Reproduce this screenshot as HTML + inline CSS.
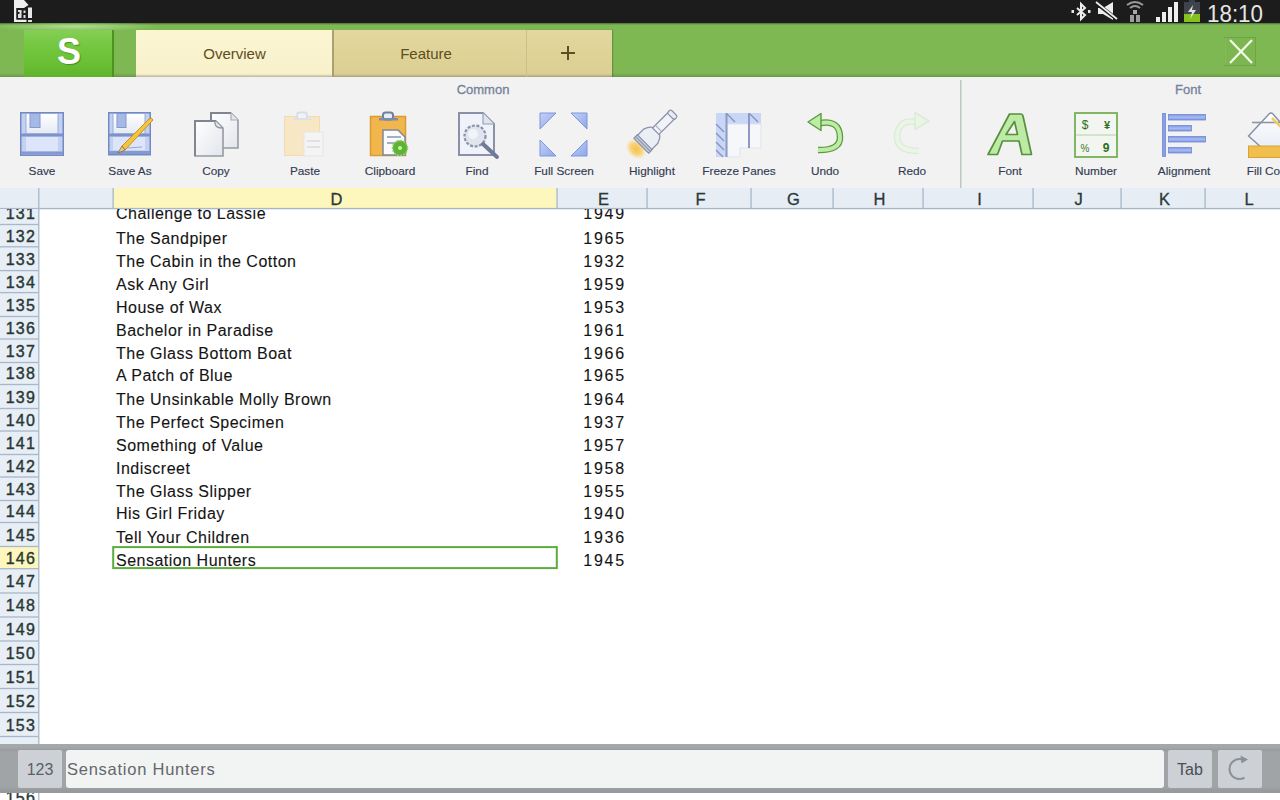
<!DOCTYPE html>
<html><head><meta charset="utf-8">
<style>
*{margin:0;padding:0;box-sizing:border-box}
html,body{width:1280px;height:800px;overflow:hidden;background:#fff;font-family:"Liberation Sans",sans-serif}
.abs{position:absolute}
#status{left:0;top:0;width:1280px;height:23px;background:#1c1c1c}
#appbar{left:0;top:23px;width:1280px;height:54px;background:linear-gradient(180deg,#4f6f3c 0px,#7db852 2px,#7fb853 50px,#77a950 52px,#6a9450 54px)}
#logo{left:24px;top:30px;width:90px;height:47px;background:linear-gradient(180deg,#84cf55 0%,#74c740 35%,#69bf33 75%,#60b22c 100%);border-right:2px solid #4a9420}
#logo span{position:absolute;left:1px;top:2px;width:88px;text-shadow:1px 1px 1px rgba(40,90,20,0.5);text-align:center;color:#fff;font-weight:bold;font-size:36px;line-height:40px}
.tab{top:30px;height:47px;text-align:center;font-size:15px;line-height:48px;color:#5e4d20}
#t1{left:136px;width:197px;background:linear-gradient(180deg,#fbf5d2 0,#f8f1cc 44px,#b8b49c 47px)}
#t2{left:332px;width:194px;background:linear-gradient(180deg,#e2d79d 0,#dccf93 44px,#a8a07a 47px);border-left:2px solid #aaa170;padding-right:8px}
#t3{left:526px;width:86px;background:linear-gradient(180deg,#e2d79d 0,#dccf93 44px,#a8a07a 47px);border-left:1px solid #cdbf88;box-shadow:1px 0 1px rgba(60,80,40,0.35)}
#t3:before{content:"";position:absolute;left:34px;top:16px;width:14px;height:2px;background:#5e4d20;top:22px}
#t3:after{content:"";position:absolute;left:40px;top:16px;width:2px;height:14px;background:#5e4d20}
#close{left:1222px;top:32px;width:38px;height:38px}
#toolbar{left:0;top:77px;width:1280px;height:111px;background:#f2f2f2}
.grp{top:82.5px;font-size:13px;color:#74839a;-webkit-text-stroke:0.3px #74839a;height:14px;line-height:14px;text-align:center}
.lbl{height:14px;line-height:14px;text-align:center;font-size:11.8px;color:#333b52;white-space:nowrap;-webkit-text-stroke:0.15px #333b52}
#sep{left:960px;top:80px;width:1px;height:108px;background:#b5bfb5}
#colhdr{left:0;top:188px;width:1280px;height:21px;background:#e5ecf4;border-bottom:1px solid #a9b9cc}
.ch{top:188px;height:21px;font-size:16.5px;line-height:23px;text-align:center;color:#2a3835;-webkit-text-stroke:0.3px #2a3835;overflow:hidden;padding-left:3px}
#rowhdr{left:0;top:209px;width:39px;height:535px;background:#e7edf5;border-right:1px solid #a9b9cc}
.rh{left:0;width:38px;height:23px;line-height:23px;text-align:right;padding-right:2px;font-size:16px;color:#2a3835;letter-spacing:1.2px;white-space:nowrap;-webkit-text-stroke:0.4px #2a3835}
.cd{left:116px;height:23px;line-height:23px;font-size:16px;color:#141414;letter-spacing:0.5px;white-space:nowrap;-webkit-text-stroke:0.1px #141414}
.ce{left:540px;width:86px;height:23px;line-height:23px;text-align:right;font-size:16px;color:#141414;letter-spacing:1.8px;-webkit-text-stroke:0.1px #141414}
#sel{left:112px;top:546px;width:446px;height:24px;border:2px solid #5cab3c}
#bottom{left:0;top:744px;width:1280px;height:49px;background:linear-gradient(180deg,#a6a9ac 0,#a3a6a9 4px,#989b9e 6px,#a1a4a7 8px,#a1a4a7 43px,#96999c 47px,#9a9da0 49px)}
#k123{left:18px;top:750px;width:44px;height:38px;background:#cdd1d6;border-radius:2px;font-size:16px;color:#5a5f66;text-align:center;line-height:39px}
#inp{left:66px;top:750px;width:1098px;height:38px;background:#f2f3f3;border-radius:3px;font-size:16.5px;color:#63676d;line-height:39px;padding-left:1px;letter-spacing:0.75px}
#tabk{left:1168px;top:750px;width:44px;height:38px;background:#cdd1d6;border-radius:2px;font-size:16px;color:#4a4f56;text-align:center;line-height:39px}
#refk{left:1218px;top:750px;width:44px;height:38px;background:#cdd1d6;border-radius:2px}
</style></head><body>
<div id="status" class="abs"></div>
<div id="appbar" class="abs"></div>
<div class="abs" style="left:0;top:23px;width:180px;height:8px;background:radial-gradient(ellipse 85px 5px at 75px 3.5px,rgba(190,235,160,0.75),rgba(190,235,160,0))"></div>
<div id="logo" class="abs"><span>S</span></div>
<svg class="abs" style="left:0;top:0" width="1280" height="80" viewBox="0 0 1280 80">
<!-- left doc icon -->
<path d="M14,0 H24 L28.5,5 L24,8 H14 Z" fill="#eeeeee"/>
<rect x="14" y="0" width="2.5" height="22" fill="#eeeeee"/>
<rect x="14" y="19.5" width="12.5" height="2.5" fill="#eeeeee"/>
<rect x="16.5" y="8" width="10.5" height="11.5" fill="#1e1e1e"/>
<rect x="18" y="10" width="3.5" height="2" fill="#e0e0e0"/><rect x="19.5" y="11.5" width="2" height="3" fill="#e0e0e0"/><rect x="18" y="14" width="3.5" height="4" fill="#e0e0e0"/>
<rect x="23.5" y="10.5" width="2" height="2.5" fill="#e0e0e0"/><rect x="23.5" y="15" width="2" height="3" fill="#e0e0e0"/>
<rect x="28" y="7.5" width="4" height="10.5" fill="#e8e8e8"/>
<rect x="28" y="20" width="4" height="2" fill="#dddddd"/>
<!-- bluetooth -->
<path d="M1077,8 L1085,15 L1081,19 V4 L1085,8 L1077,15" fill="none" stroke="#eeeeee" stroke-width="2"/>
<rect x="1071.5" y="10" width="2.5" height="3" fill="#e6e6e6"/>
<rect x="1088" y="10" width="2.5" height="3" fill="#e6e6e6"/>
<!-- mute -->
<path d="M1098,8 H1103 L1113,2 V20 L1103,14 H1098 Z" fill="#ededed"/>
<line x1="1096" y1="3" x2="1118" y2="20" stroke="#1c1c1c" stroke-width="3.5"/>
<line x1="1096" y1="2" x2="1117" y2="19" stroke="#ededed" stroke-width="1.8"/>
<!-- hotspot (gray) -->
<g fill="none" stroke="#9a9a9a" stroke-width="2">
<path d="M1127,5 Q1135,-1 1143,5"/>
<path d="M1130,8 Q1135,4 1140,8"/>
</g>
<rect x="1133" y="10" width="4" height="4" fill="#a8a8a8"/>
<rect x="1130" y="15" width="4" height="7" fill="#9c9c9c"/>
<rect x="1136" y="15" width="4" height="7" fill="#9c9c9c"/>
<!-- signal -->
<g fill="#eeeeee">
<rect x="1156" y="17" width="4" height="5"/>
<rect x="1162" y="12" width="4" height="10"/>
<rect x="1168" y="7" width="4" height="15"/>
<rect x="1174" y="2" width="4" height="20"/>
</g>
<!-- battery -->
<rect x="1189" y="0" width="6" height="2" fill="#3a3f48"/>
<rect x="1184" y="2" width="16" height="12" fill="#3e434c"/>
<rect x="1184" y="14" width="16" height="8" fill="#86c21e"/>
<path d="M1193,5 L1188,12 H1192 L1190,19 L1196,10 H1192 Z" fill="#f2f2f2" opacity="0.9"/>
<!-- time -->
<text x="1207" y="22" font-family="Liberation Sans" font-size="24" fill="#e6e6e6" textLength="56" lengthAdjust="spacingAndGlyphs">18:10</text>
<!-- close button -->
<rect x="1224.5" y="37.5" width="31" height="28" fill="#7db651" stroke="#6fa548" stroke-width="1"/>
<line x1="1225" y1="38" x2="1225" y2="65" stroke="#8cc264" stroke-width="1"/>
<line x1="1230" y1="40" x2="1252" y2="63" stroke="#f2fbe9" stroke-width="2.2"/>
<line x1="1252" y1="40" x2="1230" y2="63" stroke="#f2fbe9" stroke-width="2.2"/>
</svg>

<div id="t1" class="abs tab">Overview</div>
<div id="t2" class="abs tab">Feature</div>
<div id="t3" class="abs tab"></div>
<div id="toolbar" class="abs"></div>
<svg class="abs" style="left:0;top:0" width="1280" height="188" viewBox="0 0 1280 188">
<defs>
<linearGradient id="gw" x1="0" y1="0" x2="0" y2="1"><stop offset="0" stop-color="#ffffff"/><stop offset="1" stop-color="#e4e9f4"/></linearGradient>
<linearGradient id="gp" x1="0" y1="0" x2="1" y2="1"><stop offset="0" stop-color="#ffffff"/><stop offset="1" stop-color="#e2e5ec"/></linearGradient>
<linearGradient id="gt" x1="0" y1="0" x2="1" y2="1"><stop offset="0" stop-color="#c5d2f8"/><stop offset="1" stop-color="#8ea6ea"/></linearGradient>
<radialGradient id="glow"><stop offset="0" stop-color="#f6c048"/><stop offset="0.55" stop-color="#f7cf68" stop-opacity="0.85"/><stop offset="1" stop-color="#f8e0a0" stop-opacity="0"/></radialGradient>
</defs>
<!-- Save -->
<g>
<rect x="20.75" y="112.75" width="42.5" height="42.5" fill="#c3d0f0" stroke="#7189c5" stroke-width="1.5"/>
<rect x="26" y="113.5" width="32" height="20.5" fill="url(#gw)" stroke="#9aabd8" stroke-width="1"/>
<rect x="30" y="113.5" width="10" height="14" fill="#a6b8e6" stroke="#8599cf" stroke-width="1"/>
<rect x="21" y="133.5" width="42" height="3" fill="#7d92cb"/>
<rect x="26" y="137" width="32" height="14" fill="#dce5f9"/>
<rect x="21" y="151.5" width="42" height="3" fill="#8499d0"/>
</g>
<!-- Save As -->
<g>
<rect x="108.75" y="112.75" width="41.5" height="42" fill="#c3d0f0" stroke="#7189c5" stroke-width="1.5"/>
<rect x="113" y="113.5" width="32" height="20.5" fill="url(#gw)" stroke="#9aabd8" stroke-width="1"/>
<rect x="117" y="113.5" width="9" height="14" fill="#a6b8e6" stroke="#8599cf" stroke-width="1"/>
<rect x="109" y="133.5" width="41" height="3" fill="#7d92cb"/>
<rect x="113" y="137" width="32" height="13" fill="#dce5f9"/>
<rect x="109" y="151" width="41" height="3" fill="#8499d0"/>
<path d="M122,146 L149,119 Q152,117 153,120 L125,150 Z" fill="#f3c43e" stroke="#c99324" stroke-width="1"/>
<path d="M122,146 L125,150 L118,153 Z" fill="#e8c890" stroke="#8a6a30" stroke-width="0.8"/>
<line x1="127" y1="148" x2="142" y2="147" stroke="#9aa8cc" stroke-width="1.2"/>
</g>
<!-- Copy -->
<g>
<path d="M211,113 H231 L238,120 V148 H211 Z" fill="url(#gp)" stroke="#9499a3" stroke-width="1.6"/>
<path d="M211,148 V113 H231" fill="none" stroke="#80868f" stroke-width="2"/>
<path d="M231,113 V120 H238" fill="#e4e6ea" stroke="#a8adb6" stroke-width="1.2"/>
<path d="M195,121 H216 L223,128 V156 H195 Z" fill="url(#gp)" stroke="#9499a3" stroke-width="1.6"/>
<path d="M195,156 V121 H216" fill="none" stroke="#80868f" stroke-width="2"/>
<path d="M215,121 Q214,128 222,128" fill="#e6e8ec" stroke="#8b909b" stroke-width="1.3"/>
</g>
<!-- Paste (disabled) -->
<g>
<rect x="284.5" y="116.5" width="35" height="39" fill="#f7e7c4" stroke="#eedcb6" stroke-width="1"/>
<rect x="297" y="112.5" width="10" height="6.5" rx="2.5" fill="#f2f3f5" stroke="#d9dde6" stroke-width="1.8"/>
<rect x="293" y="118" width="19" height="2" fill="#dde1e8"/>
<rect x="304" y="132" width="19" height="24" fill="#f4f4f4" stroke="#e6e6e6" stroke-width="1"/>
<line x1="307" y1="141" x2="320" y2="141" stroke="#dcdcdc" stroke-width="1.5"/>
<line x1="307" y1="147" x2="320" y2="147" stroke="#dcdcdc" stroke-width="1.5"/>
</g>
<!-- Clipboard -->
<g>
<rect x="370.5" y="116.5" width="35" height="39" fill="#f1b64c" stroke="#d99c34" stroke-width="1.5"/>
<rect x="383" y="112.5" width="10" height="7" rx="2.5" fill="#e8ecf4" stroke="#6f80a4" stroke-width="2"/>
<rect x="379" y="118" width="19" height="2.5" fill="#7d8cac"/>
<path d="M383,130 H398 L405,137 V155 H383 Z" fill="#fafbfd" stroke="#7f889c" stroke-width="1.5"/>
<line x1="387" y1="137" x2="401" y2="137" stroke="#8a94b0" stroke-width="1.5"/>
<line x1="387" y1="143" x2="401" y2="143" stroke="#8a94b0" stroke-width="1.5"/>
<circle cx="400" cy="148" r="7.5" fill="#5db332" stroke="#9ad07a" stroke-width="1.5" stroke-dasharray="2 1.2"/>
<circle cx="400" cy="148" r="2" fill="#c8f0b0"/>
</g>
<!-- Find -->
<g>
<path d="M459,113 H483 L494,124 V155 H459 Z" fill="#eff2f9" stroke="#8990a8" stroke-width="2"/>
<path d="M483,113 V124 H494" fill="#dfe3ec" stroke="#9aa0b5" stroke-width="1.2"/>
<circle cx="475" cy="136" r="10.5" fill="#e0e4ee" stroke="#8a92aa" stroke-width="2.2" stroke-dasharray="3 1.6"/>
<circle cx="473" cy="134" r="5" fill="#f4f6fa" opacity="0.8"/>
<line x1="483" y1="144" x2="497" y2="157" stroke="#6f7a98" stroke-width="4" stroke-linecap="round"/>
</g>
<!-- Full Screen -->
<g fill="url(#gt)" stroke="#7f96da" stroke-width="1">
<path d="M540,113 H556 L540,129 Z"/>
<path d="M571,113 H587 V129 Z"/>
<path d="M540,140 L556,156 H540 Z"/>
<path d="M587,140 V156 H571 Z"/>
</g>
<!-- Highlight -->
<g>
<ellipse cx="636" cy="149" rx="12" ry="9" transform="rotate(45 636 149)" fill="url(#glow)"/>
<g transform="rotate(-45 643 144)">
<path d="M644,134 L654,134 Q663,137 663,144 Q663,151 654,154 L644,154 Z" fill="#eceef5" stroke="#8c94ac" stroke-width="1.3"/>
<rect x="640.5" y="133.5" width="5" height="21" fill="#c8cede" stroke="#7f88a3" stroke-width="1"/><line x1="643" y1="134" x2="643" y2="154" stroke="#8a93ad" stroke-width="1.2"/>
<rect x="661" y="139.5" width="22" height="9" fill="#f1f3f8" stroke="#8c94ac" stroke-width="1.3"/>
<line x1="665" y1="140" x2="665" y2="148" stroke="#a0a8bd" stroke-width="1"/>
<rect x="682" y="139" width="5" height="10" rx="2" fill="#e8ebf2" stroke="#8c94ac" stroke-width="1.2"/>
</g>
</g>
<!-- Freeze Panes -->
<g>
<rect x="716" y="113" width="45" height="11" fill="#cad6f6"/>
<rect x="716" y="113" width="11" height="44" fill="#cad6f6"/>
<path d="M727,124 H761 V148 H740 V157 H727 Z" fill="#f6f7fa" stroke="#dfe3ea" stroke-width="1"/>
<line x1="726.5" y1="113" x2="726.5" y2="157" stroke="#8d9ac4" stroke-width="2"/>
<line x1="749" y1="113" x2="749" y2="148" stroke="#8d9ac4" stroke-width="2"/>
<g stroke="#8592c0" stroke-width="1.3">
<line x1="716" y1="124" x2="724" y2="132"/><line x1="716" y1="133" x2="724" y2="141"/><line x1="716" y1="142" x2="724" y2="150"/><line x1="716" y1="150" x2="723" y2="157"/>
<line x1="727" y1="114" x2="735" y2="122"/><line x1="750" y1="114" x2="758" y2="122"/>
</g>
</g>
<!-- Undo -->
<g>
<path d="M819,123.5 Q839.5,119 840,137 Q840.5,150.5 818,150" fill="none" stroke="#5a9a40" stroke-width="6.5"/>
<path d="M819,123.5 Q839.5,119 840,137 Q840.5,150.5 818,150" fill="none" stroke="#bdeca4" stroke-width="4"/>
<path d="M808,122 L821,113.5 L821,130.5 Z" fill="#bdeca4" stroke="#5a9a40" stroke-width="1.4" stroke-linejoin="round"/>
</g>
<!-- Redo (disabled) -->
<g>
<path d="M916,122 Q898,119 897,137 Q897,151 919,151" fill="none" stroke="#dcebd6" stroke-width="6.5"/>
<path d="M916,122 Q898,119 897,137 Q897,151 919,151" fill="none" stroke="#ebf5e6" stroke-width="4"/>
<path d="M929,121 L915,112.5 L915,129.5 Z" fill="#ebf5e6" stroke="#dcebd6" stroke-width="1.5" stroke-linejoin="round"/>
</g>
<rect x="960" y="80" width="1.5" height="108" fill="#bcc8bc"/>
<!-- Font A -->
<path d="M1009.5,114 H1021 Q1022.5,114 1023,116 L1031.5,154.5 H1022 L1019,141 H1002.5 L997.5,154.5 H988 Z M1006,134.5 H1017.5 L1014.5,121.5 Z" fill="#bdeaa5" stroke="#578f3c" stroke-width="1.7" fill-rule="evenodd" stroke-linejoin="round"/>
<!-- Number -->
<g>
<rect x="1075" y="113" width="42" height="44" fill="#f2f5f0" stroke="#76b055" stroke-width="1.8"/>
<line x1="1076" y1="135" x2="1116" y2="135" stroke="#b5d0a8" stroke-width="1"/>
<text x="1085" y="129" font-family="Liberation Sans" font-size="12" fill="#2d6e20" text-anchor="middle">$</text>
<text x="1107" y="129" font-family="Liberation Sans" font-size="11" font-weight="bold" fill="#2d6e20" text-anchor="middle">¥</text>
<text x="1085" y="152" font-family="Liberation Sans" font-size="10" fill="#3a7a2a" text-anchor="middle">%</text>
<text x="1106" y="152" font-family="Liberation Sans" font-size="12" font-weight="bold" fill="#2d6e20" text-anchor="middle">9</text>
</g>
<!-- Alignment -->
<defs><linearGradient id="ga" x1="0" y1="0" x2="0" y2="1"><stop offset="0" stop-color="#7b94e0"/><stop offset="0.5" stop-color="#a9bcf2"/><stop offset="1" stop-color="#7b94e0"/></linearGradient></defs>
<g fill="url(#ga)" stroke="#7088d4" stroke-width="0.8">
<rect x="1162.5" y="113.5" width="3" height="43" fill="#8aa0e6"/>
<rect x="1168.5" y="114.5" width="37" height="5.5"/>
<rect x="1168.5" y="125.5" width="23" height="5.5"/>
<rect x="1168.5" y="136.5" width="37" height="5.5"/>
<rect x="1168.5" y="147.5" width="23" height="5.5"/>
</g>
<!-- Fill color -->
<g>
<path d="M1248.5,136 L1269,114 Q1271,112 1273,114 L1292,136 L1271,156 Z" fill="url(#gw)" stroke="#858ea3" stroke-width="1.4"/>
<line x1="1252" y1="122.5" x2="1280" y2="122.5" stroke="#8d95aa" stroke-width="1.6"/>
<line x1="1272" y1="118" x2="1281" y2="127" stroke="#f2cc60" stroke-width="2.5"/>
<rect x="1248.5" y="146" width="34" height="11.5" fill="#f1bf4e" stroke="#d9a234" stroke-width="1"/>
</g>
</svg>

<div class="abs lbl" style="left:-18px;top:164px;width:120px">Save</div>
<div class="abs lbl" style="left:70px;top:164px;width:120px">Save As</div>
<div class="abs lbl" style="left:156px;top:164px;width:120px">Copy</div>
<div class="abs lbl" style="left:245px;top:164px;width:120px">Paste</div>
<div class="abs lbl" style="left:330px;top:164px;width:120px">Clipboard</div>
<div class="abs lbl" style="left:417px;top:164px;width:120px">Find</div>
<div class="abs lbl" style="left:504px;top:164px;width:120px">Full Screen</div>
<div class="abs lbl" style="left:592px;top:164px;width:120px">Highlight</div>
<div class="abs lbl" style="left:679px;top:164px;width:120px">Freeze Panes</div>
<div class="abs lbl" style="left:765px;top:164px;width:120px">Undo</div>
<div class="abs lbl" style="left:852px;top:164px;width:120px">Redo</div>
<div class="abs lbl" style="left:950px;top:164px;width:120px">Font</div>
<div class="abs lbl" style="left:1036px;top:164px;width:120px">Number</div>
<div class="abs lbl" style="left:1124px;top:164px;width:120px">Alignment</div>
<div class="abs lbl" style="left:1210px;top:164px;width:120px">Fill Color</div>
<div class="abs grp" style="left:423px;width:120px">Common</div>
<div class="abs grp" style="left:1128px;width:120px">Font</div>

<div class="abs" style="left:0;top:188px;width:1280px;height:612px;overflow:hidden"><div class="abs" style="left:0;top:-188px;width:1280px;height:800px"><svg class="abs" style="left:0;top:188px" width="1280" height="612" viewBox="0 188 1280 612">
<rect x="0" y="188" width="1280" height="21" fill="#e6edf5"/>
<rect x="113" y="188" width="444" height="21" fill="#fdf7bd"/>
<rect x="38.15" y="188" width="1.3" height="21" fill="#a6b8ca"/>
<rect x="112.5" y="188" width="1.3" height="21" fill="#a6b8ca"/>
<rect x="556.4" y="188" width="1.3" height="21" fill="#a6b8ca"/>
<rect x="646.4" y="188" width="1.3" height="21" fill="#a6b8ca"/>
<rect x="750.4" y="188" width="1.3" height="21" fill="#a6b8ca"/>
<rect x="832.4" y="188" width="1.3" height="21" fill="#a6b8ca"/>
<rect x="922.4" y="188" width="1.3" height="21" fill="#a6b8ca"/>
<rect x="1032.4" y="188" width="1.3" height="21" fill="#a6b8ca"/>
<rect x="1120.4" y="188" width="1.3" height="21" fill="#a6b8ca"/>
<rect x="1204.4" y="188" width="1.3" height="21" fill="#a6b8ca"/>
<rect x="0" y="207.9" width="1280" height="1.4" fill="#a6b8ca"/>
<rect x="0" y="209" width="38.75" height="535" fill="#e7eef5"/>
<rect x="0" y="546.5" width="38.75" height="22.200000000000045" fill="#fdf7bd"/>
<rect x="0" y="223.85" width="38.75" height="1.3" fill="#a6b8ca"/>
<rect x="0" y="246.15" width="38.75" height="1.3" fill="#a6b8ca"/>
<rect x="0" y="269.95000000000005" width="38.75" height="1.3" fill="#a6b8ca"/>
<rect x="0" y="291.95000000000005" width="38.75" height="1.3" fill="#a6b8ca"/>
<rect x="0" y="315.85" width="38.75" height="1.3" fill="#a6b8ca"/>
<rect x="0" y="338.35" width="38.75" height="1.3" fill="#a6b8ca"/>
<rect x="0" y="361.85" width="38.75" height="1.3" fill="#a6b8ca"/>
<rect x="0" y="383.85" width="38.75" height="1.3" fill="#a6b8ca"/>
<rect x="0" y="407.85" width="38.75" height="1.3" fill="#a6b8ca"/>
<rect x="0" y="430.35" width="38.75" height="1.3" fill="#a6b8ca"/>
<rect x="0" y="453.85" width="38.75" height="1.3" fill="#a6b8ca"/>
<rect x="0" y="476.35" width="38.75" height="1.3" fill="#a6b8ca"/>
<rect x="0" y="499.85" width="38.75" height="1.3" fill="#a6b8ca"/>
<rect x="0" y="521.85" width="38.75" height="1.3" fill="#a6b8ca"/>
<rect x="0" y="545.85" width="38.75" height="1.3" fill="#a6b8ca"/>
<rect x="0" y="568.0500000000001" width="38.75" height="1.3" fill="#a6b8ca"/>
<rect x="0" y="592.35" width="38.75" height="1.3" fill="#a6b8ca"/>
<rect x="0" y="616.35" width="38.75" height="1.3" fill="#a6b8ca"/>
<rect x="0" y="640.35" width="38.75" height="1.3" fill="#a6b8ca"/>
<rect x="0" y="663.85" width="38.75" height="1.3" fill="#a6b8ca"/>
<rect x="0" y="687.85" width="38.75" height="1.3" fill="#a6b8ca"/>
<rect x="0" y="711.85" width="38.75" height="1.3" fill="#a6b8ca"/>
<rect x="0" y="735.85" width="38.75" height="1.3" fill="#a6b8ca"/>
<rect x="0" y="759.85" width="38.75" height="1.3" fill="#a6b8ca"/>
<rect x="0" y="783.85" width="38.75" height="1.3" fill="#a6b8ca"/>
<rect x="0" y="807.85" width="38.75" height="1.3" fill="#a6b8ca"/>
<rect x="38.15" y="209" width="1.3" height="600" fill="#a6b8ca"/>
<rect x="113.2" y="547.1" width="443.6" height="21.000000000000046" fill="none" stroke="#5dac3c" stroke-width="2"/>
</svg>
<div class="abs" style="left:0;top:209px;width:1280px;height:591px;overflow:hidden"><div class="abs" style="left:0;top:-209px;width:1280px;height:800px"><div class="abs rh" style="top:202px">131</div>
<div class="abs cd" style="top:202px">Challenge to Lassie</div>
<div class="abs ce" style="top:202px">1949</div>
<div class="abs rh" style="top:225px">132</div>
<div class="abs cd" style="top:227px">The Sandpiper</div>
<div class="abs ce" style="top:227px">1965</div>
<div class="abs rh" style="top:248px">133</div>
<div class="abs cd" style="top:250px">The Cabin in the Cotton</div>
<div class="abs ce" style="top:250px">1932</div>
<div class="abs rh" style="top:271px">134</div>
<div class="abs cd" style="top:273px">Ask Any Girl</div>
<div class="abs ce" style="top:273px">1959</div>
<div class="abs rh" style="top:294px">135</div>
<div class="abs cd" style="top:296px">House of Wax</div>
<div class="abs ce" style="top:296px">1953</div>
<div class="abs rh" style="top:317px">136</div>
<div class="abs cd" style="top:319px">Bachelor in Paradise</div>
<div class="abs ce" style="top:319px">1961</div>
<div class="abs rh" style="top:340px">137</div>
<div class="abs cd" style="top:342px">The Glass Bottom Boat</div>
<div class="abs ce" style="top:342px">1966</div>
<div class="abs rh" style="top:362px">138</div>
<div class="abs cd" style="top:364px">A Patch of Blue</div>
<div class="abs ce" style="top:364px">1965</div>
<div class="abs rh" style="top:386px">139</div>
<div class="abs cd" style="top:388px">The Unsinkable Molly Brown</div>
<div class="abs ce" style="top:388px">1964</div>
<div class="abs rh" style="top:409px">140</div>
<div class="abs cd" style="top:411px">The Perfect Specimen</div>
<div class="abs ce" style="top:411px">1937</div>
<div class="abs rh" style="top:432px">141</div>
<div class="abs cd" style="top:434px">Something of Value</div>
<div class="abs ce" style="top:434px">1957</div>
<div class="abs rh" style="top:455px">142</div>
<div class="abs cd" style="top:457px">Indiscreet</div>
<div class="abs ce" style="top:457px">1958</div>
<div class="abs rh" style="top:478px">143</div>
<div class="abs cd" style="top:480px">The Glass Slipper</div>
<div class="abs ce" style="top:480px">1955</div>
<div class="abs rh" style="top:500px">144</div>
<div class="abs cd" style="top:502px">His Girl Friday</div>
<div class="abs ce" style="top:502px">1940</div>
<div class="abs rh" style="top:524px">145</div>
<div class="abs cd" style="top:526px">Tell Your Children</div>
<div class="abs ce" style="top:526px">1936</div>
<div class="abs rh" style="top:547px">146</div>
<div class="abs cd" style="top:549px">Sensation Hunters</div>
<div class="abs ce" style="top:549px">1945</div>
<div class="abs rh" style="top:570px">147</div>
<div class="abs rh" style="top:594px">148</div>
<div class="abs rh" style="top:618px">149</div>
<div class="abs rh" style="top:642px">150</div>
<div class="abs rh" style="top:666px">151</div>
<div class="abs rh" style="top:690px">152</div>
<div class="abs rh" style="top:714px">153</div>
<div class="abs rh" style="top:786px">156</div></div></div><div class="abs ch" style="left:113.1px;width:443.9px">D</div>
<div class="abs ch" style="left:557px;width:90px">E</div>
<div class="abs ch" style="left:647px;width:104px">F</div>
<div class="abs ch" style="left:751px;width:82px">G</div>
<div class="abs ch" style="left:833px;width:90px">H</div>
<div class="abs ch" style="left:923px;width:110px">I</div>
<div class="abs ch" style="left:1033px;width:88px">J</div>
<div class="abs ch" style="left:1121px;width:84px">K</div>
<div class="abs ch" style="left:1205px;width:85px">L</div></div></div>
<div id="bottom" class="abs"></div>
<div id="k123" class="abs">123</div>
<div id="inp" class="abs">Sensation Hunters</div>
<div id="tabk" class="abs">Tab</div>
<div id="refk" class="abs"><svg width="44" height="38" viewBox="0 0 44 38"><path d="M24.9,9.6 A10,10 0 1,0 26.5,27.7" fill="none" stroke="#8a9097" stroke-width="2"/><path d="M22.5,5.5 L30,9.5 L23.5,13.5 Z" fill="#8a9097"/></svg></div>
</body></html>
